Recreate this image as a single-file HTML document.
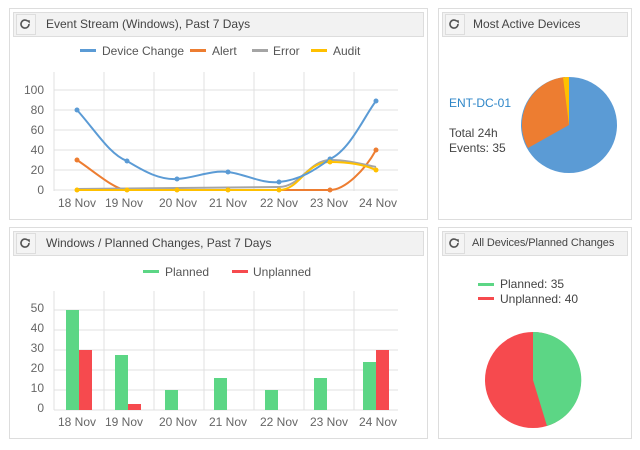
<!DOCTYPE html>
<html><head><style>
body{margin:0;width:640px;height:450px;background:#fff;font-family:"Liberation Sans",sans-serif;overflow:hidden;position:relative}
.p{position:absolute;border:1px solid #ddd;background:#fff;box-sizing:border-box}
.h{position:absolute;left:3px;right:3px;top:3px;height:25px;background:#f2f2f2;border:1px solid #ddd;box-sizing:border-box;font-size:12px;color:#444;line-height:23px;white-space:nowrap}
.b{position:absolute;left:2px;top:1px;width:20px;height:21px;border:1px solid #ddd;box-sizing:border-box;background:#f4f4f4}
.h span{position:absolute;left:32px}
svg{position:absolute;left:0;top:0}
text{font-family:"Liberation Sans",sans-serif}
</style></head><body>
<div class="p" style="left:9px;top:8px;width:419px;height:212px"><div class="h"><div class="b"></div><span>Event Stream (Windows), Past 7 Days</span></div></div>
<div class="p" style="left:438px;top:8px;width:194px;height:212px"><div class="h"><div class="b"></div><span style="left:30px">Most Active Devices</span></div></div>
<div class="p" style="left:9px;top:227px;width:419px;height:212px"><div class="h"><div class="b"></div><span>Windows / Planned Changes, Past 7 Days</span></div></div>
<div class="p" style="left:438px;top:227px;width:194px;height:212px"><div class="h"><div class="b"></div><span style="left:29px;font-size:11px;letter-spacing:-0.1px">All Devices/Planned Changes</span></div></div>
<svg width="640" height="450" style="z-index:5">
<defs><g id="ic"><path d="M29 24A4 4 0 1 1 27.8 21.2" fill="none" stroke="#555" stroke-width="1.6"/><path d="M26.3 20.2L29.8 20.2L29.8 23.7Z" fill="#555"/></g></defs>
<use href="#ic"/><use href="#ic" x="429"/><use href="#ic" y="219"/><use href="#ic" x="429" y="219"/>
<!-- chart1 -->
<g stroke="#e0e0e0" stroke-width="1">
<path d="M54 72V191M104 72V191M154 72V191M204 72V191M254 72V191M304 72V191M354 72V191"/>
<path d="M54 90H398M54 110H398M54 130H398M54 150H398M54 170H398M54 190H398"/></g>
<g font-size="12" fill="#666" text-anchor="end"><text x="44" y="94">100</text><text x="44" y="114">80</text><text x="44" y="134">60</text><text x="44" y="154">40</text><text x="44" y="174">20</text><text x="44" y="194">0</text></g>
<g font-size="12" fill="#666" text-anchor="middle"><text x="77" y="207">18 Nov</text><text x="124" y="207">19 Nov</text><text x="178" y="207">20 Nov</text><text x="228" y="207">21 Nov</text><text x="279" y="207">22 Nov</text><text x="329" y="207">23 Nov</text><text x="378" y="207">24 Nov</text></g>
<g font-size="12" fill="#555"><rect x="80" y="49" width="16" height="3" fill="#5b9bd5"/><text x="102" y="55">Device Change</text>
<rect x="190" y="49" width="16" height="3" fill="#ed7d31"/><text x="212" y="55">Alert</text>
<rect x="252" y="49" width="16" height="3" fill="#a5a5a5"/><text x="273" y="55">Error</text>
<rect x="311" y="49" width="16" height="3" fill="#ffc000"/><text x="333" y="55">Audit</text></g>
<g fill="none" stroke-width="2">
<path stroke="#ed7d31" d="M77 160C95 172 115 190 127 190L330 190C345 190 365 170 376 150"/>
<path stroke="#a5a5a5" d="M77 189L279 187C300 187 310 160 330 160C350 160 365 165 376 167"/>
<path stroke="#ffc000" d="M77 190L279 190C300 190 305 162 330 162C350 162 365 165 376 170"/>
<path stroke="#5b9bd5" d="M77 110C95 130 110 155 127 161C145 172 160 180 177 179C195 178 210 170 228 172C245 174 262 184 279 182C300 180 315 170 330 159C350 150 365 115 376 101"/>
</g>
<g fill="#5b9bd5"><circle cx="77" cy="110" r="2.5"/><circle cx="127" cy="161" r="2.5"/><circle cx="177" cy="179" r="2.5"/><circle cx="228" cy="172" r="2.5"/><circle cx="279" cy="182" r="2.5"/><circle cx="330" cy="159" r="2.5"/><circle cx="376" cy="101" r="2.5"/></g>
<g fill="#ed7d31"><circle cx="77" cy="160" r="2.5"/><circle cx="330" cy="190" r="2.5"/><circle cx="376" cy="150" r="2.5"/></g>
<g fill="#ffc000"><circle cx="77" cy="190" r="2.5"/><circle cx="127" cy="190" r="2.5"/><circle cx="177" cy="190" r="2.5"/><circle cx="228" cy="190" r="2.5"/><circle cx="279" cy="190" r="2.5"/><circle cx="330" cy="162" r="2.5"/><circle cx="376" cy="170" r="2.5"/></g>
<!-- chart3 -->
<g stroke="#e0e0e0" stroke-width="1">
<path d="M54 291V410M104 291V410M154 291V410M204 291V410M254 291V410M304 291V410M354 291V410"/>
<path d="M54 310H398M54 330H398M54 350H398M54 370H398M54 390H398M54 410H398"/></g>
<g font-size="12" fill="#666" text-anchor="end"><text x="44" y="312">50</text><text x="44" y="332">40</text><text x="44" y="352">30</text><text x="44" y="372">20</text><text x="44" y="392">10</text><text x="44" y="412">0</text></g>
<g font-size="12" fill="#666" text-anchor="middle"><text x="77" y="426">18 Nov</text><text x="124" y="426">19 Nov</text><text x="178" y="426">20 Nov</text><text x="228" y="426">21 Nov</text><text x="279" y="426">22 Nov</text><text x="329" y="426">23 Nov</text><text x="378" y="426">24 Nov</text></g>
<g font-size="12" fill="#555"><rect x="143" y="270" width="16" height="3" fill="#5cd685"/><text x="165" y="276">Planned</text>
<rect x="232" y="270" width="16" height="3" fill="#f64a4e"/><text x="253" y="276">Unplanned</text></g>
<g fill="#5cd685"><rect x="66" y="310" width="13" height="100"/><rect x="115" y="355" width="13" height="55"/><rect x="165" y="390" width="13" height="20"/><rect x="214" y="378" width="13" height="32"/><rect x="265" y="390" width="13" height="20"/><rect x="314" y="378" width="13" height="32"/><rect x="363" y="362" width="13" height="48"/></g>
<g fill="#f64a4e"><rect x="79" y="350" width="13" height="60"/><rect x="128" y="404" width="13" height="6"/><rect x="376" y="350" width="13" height="60"/></g>
<!-- pie1 -->
<circle cx="569" cy="125" r="48" fill="#5b9bd5"/>
<path d="M569 125L528 148A48 48 0 0 1 565 77Z" fill="#ed7d31"/>
<path d="M569 125L563 77.4A48 48 0 0 1 569 77Z" fill="#ffc000"/>
<text x="449" y="107" font-size="12" fill="#2e86c8">ENT-DC-01</text>
<text x="449" y="137" font-size="12" fill="#444">Total 24h</text>
<text x="449" y="152" font-size="12" fill="#444">Events: 35</text>
<!-- pie2 -->
<circle cx="533" cy="380" r="48" fill="#f64a4e"/>
<path d="M533 380L533 332A48 48 0 0 1 547 426Z" fill="#5cd685"/>
<rect x="478" y="283" width="16" height="3" fill="#5cd685"/><text x="500" y="288" font-size="12" fill="#444">Planned: 35</text>
<rect x="478" y="297" width="16" height="3" fill="#f64a4e"/><text x="500" y="303" font-size="12" fill="#444">Unplanned: 40</text>
</svg>
</body></html>
